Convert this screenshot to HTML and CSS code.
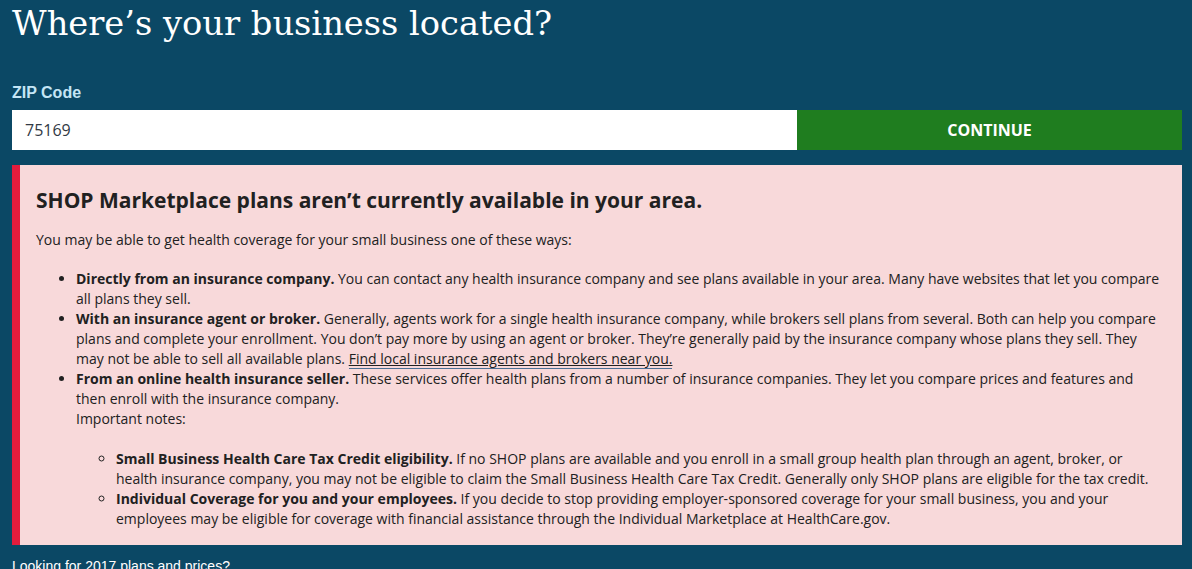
FILE: index.html
```html
<!DOCTYPE html>
<html lang="en">
<head>
    <meta charset="UTF-8">
    <meta name="viewport" content="width=device-width, initial-scale=1.0">
    <title>SHOP Marketplace - Where's your business located?</title>
    <link rel="stylesheet" href="styles.css">
</head>
<body>
    <div class="page">
        <h1>Where’s your business located?</h1>

        <form class="zip-form" onsubmit="return false;">
            <label for="zip">ZIP Code</label>
            <div class="zip-row">
                <input type="text" id="zip" value="75169">
                <button type="submit">CONTINUE</button>
            </div>
        </form>

        <div class="alert">
            <h2>SHOP Marketplace plans aren’t currently available in your area.</h2>
            <p>You may be able to get health coverage for your small business one of these ways:</p>
            <ul>
                <li><strong>Directly from an insurance company.</strong> You can contact any health insurance company and see plans available in your area. Many have websites that let you compare all plans they sell.</li>
                <li><strong>With an insurance agent or broker.</strong> Generally, agents work for a single health insurance company, while brokers sell plans from several. Both can help you compare plans and complete your enrollment. You don’t pay more by using an agent or broker. They’re generally paid by the insurance company whose plans they sell. They may not be able to sell all available plans. <a href="#">Find local insurance agents and brokers near you.</a></li>
                <li><strong>From an online health insurance seller.</strong> These services offer health plans from a number of insurance companies. They let you compare prices and features and then enroll with the insurance company.<br>
                    Important notes:
                    <ul>
                        <li><strong>Small Business Health Care Tax Credit eligibility.</strong> If no SHOP plans are available and you enroll in a small group health plan through an agent, broker, or health insurance company, you may not be eligible to claim the Small Business Health Care Tax Credit. Generally only SHOP plans are eligible for the tax credit.</li>
                        <li><strong>Individual Coverage for you and your employees.</strong> If you decide to stop providing employer-sponsored coverage for your small business, you and your employees may be eligible for coverage with financial assistance through the Individual Marketplace at HealthCare.gov.</li>
                    </ul>
                </li>
            </ul>
        </div>

        <p class="older-plans">Looking for 2017 plans and prices?</p>
    </div>
</body>
</html>
```

FILE: styles.css
```css
body {
    margin: 0;
    background-color: #0b4865;
    font-family: 'Open Sans', sans-serif;
    color: #212121;
}

.page {
    padding: 2px 10px 0 12px;
}

h1 {
    margin: 0;
    font-family: 'DejaVu Serif', serif;
    font-weight: normal;
    font-size: 33.7px;
    line-height: 44px;
    color: #fff;
}

.zip-form {
    margin-top: 37px;
}

.zip-form label {
    display: block;
    margin-bottom: 7px;
    font-family: 'Liberation Sans', Arial, sans-serif;
    font-weight: bold;
    font-size: 16px;
    line-height: 20px;
    color: #c5e5f5;
}

.zip-row {
    display: flex;
    height: 40px;
}

.zip-row input {
    flex: 0 0 67.1%;
    box-sizing: border-box;
    margin: 0;
    padding: 0 13px;
    border: none;
    font-family: 'Open Sans', sans-serif;
    font-size: 16px;
    color: #323a45;
    background: #fff;
}

.zip-row button {
    flex: 1;
    margin: 0;
    border: none;
    background-color: #1f7d1f;
    color: #fff;
    font-family: 'Open Sans', sans-serif;
    font-weight: bold;
    font-size: 16px;
    cursor: pointer;
}

.alert {
    margin-top: 15px;
    padding: 21px 20px 16px 16px;
    background-color: #f8d9da;
    border-left: 8px solid #e31c3d;
    font-size: 14px;
    line-height: 20px;
}

.alert h2 {
    margin: 0 0 16px;
    font-size: 21px;
    line-height: 28px;
    font-weight: bold;
}

.alert p {
    margin: 0 0 19px;
}

.alert ul {
    margin: 0;
    padding-left: 40px;
}

.alert ul ul {
    margin-top: 20px;
    list-style-type: circle;
}

.alert a {
    color: #212121;
    text-decoration: underline;
    border-bottom: 1px solid #4a6f95;
}

.older-plans {
    margin: 11px 0 0;
    font-family: 'Liberation Sans', Arial, sans-serif;
    font-size: 14px;
    line-height: 20px;
    color: #fff;
}
```
